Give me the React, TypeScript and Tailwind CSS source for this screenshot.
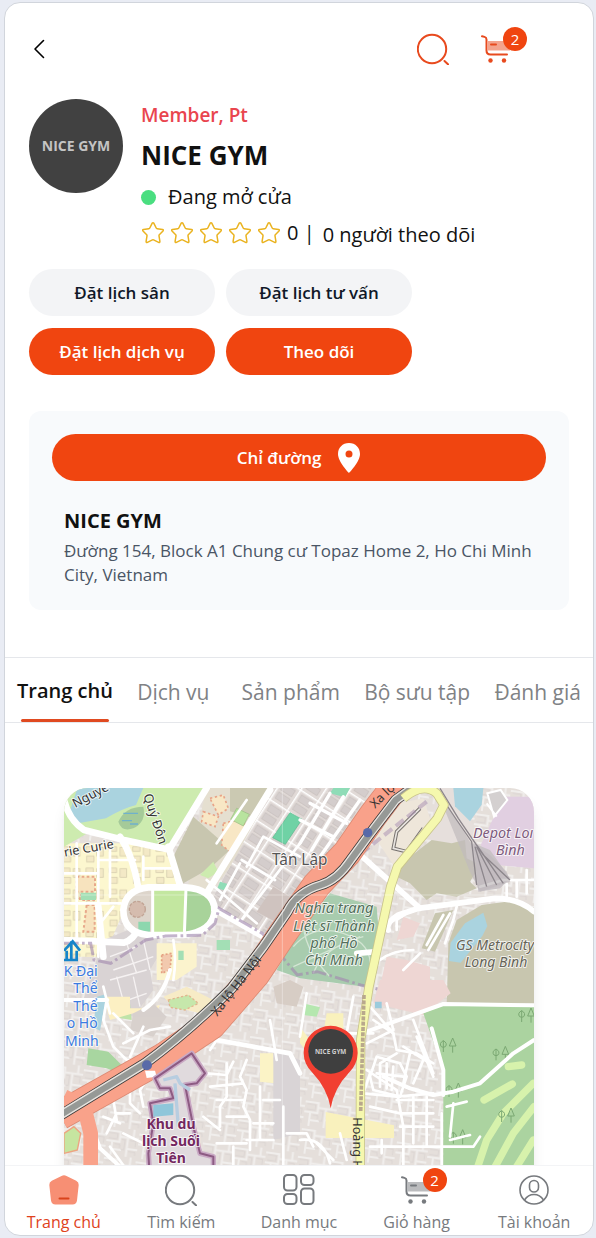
import type { ReactNode } from "react";
import { clsx } from "clsx";

const actions = [
  { label: "Đặt lịch sân", primary: false },
  { label: "Đặt lịch tư vấn", primary: false },
  { label: "Đặt lịch dịch vụ", primary: true },
  { label: "Theo dõi", primary: true },
];

const tabs = ["Trang chủ", "Dịch vụ", "Sản phẩm", "Bộ sưu tập", "Đánh giá"];

function SearchIcon() {
  return (
    <svg viewBox="0 0 32 32" className="h-8 w-8" fill="none" stroke="currentColor" strokeWidth="2">
      <circle cx="15" cy="16" r="14.2" />
      <path d="M27.5 28l3.7 3.5" strokeLinecap="round" />
    </svg>
  );
}

function CartIcon() {
  return (
    <svg viewBox="0 0 32 32" className="h-8 w-8" fill="none" stroke="currentColor" strokeLinecap="round">
      <path d="M7 8h22v9.5H7z" fill="currentColor" stroke="none" opacity="0.5" />
      <path d="M1 3.2l2.5.7q2 .6 2 2.600V17.500q0 4 4 4H26" strokeWidth="2" />
      <path d="M10 11.500h5" strokeWidth="2" />
      <circle cx="9.500" cy="27.500" r="2.200" fill="currentColor" stroke="none" />
      <circle cx="23" cy="27.500" r="2.200" fill="currentColor" stroke="none" />
    </svg>
  );
}

function HomeIcon() {
  return (
    <svg viewBox="0 0 32 32" className="h-8 w-8">
      <path
        d="M13.500 2q2.500-1.600 5 0l9.700 4.700q2.700 1.500 2.500 4.300L29 26.500q-.6 4-4.500 4h-17q-3.900 0-4.500-4L1.300 11Q1.100 8.200 3.800 6.700z"
        fill="#f78f74"
      />
      <path d="M11.500 24.500h9" stroke="#d9441c" strokeWidth="2" strokeLinecap="round" />
    </svg>
  );
}

function GridIcon() {
  return (
    <svg viewBox="0 0 32 32" className="h-8 w-8" fill="none" stroke="currentColor" strokeWidth="2">
      <rect x="1" y="1" width="12.500" height="15.500" rx="3.500" />
      <rect x="1" y="20" width="12.500" height="10" rx="3.500" />
      <rect x="18" y="1" width="12.500" height="10" rx="3.500" />
      <rect x="18" y="14.500" width="12.500" height="15.500" rx="3.500" />
    </svg>
  );
}

function UserIcon() {
  return (
    <svg viewBox="0 0 32 32" className="h-8 w-8" fill="none" stroke="currentColor" strokeWidth="1.6">
      <circle cx="16" cy="16" r="14" />
      <rect x="11.500" y="6.500" width="9" height="11.500" rx="4.500" />
      <path d="M6.500 26q3.500-5.500 9.500-5.500t9.500 5.500" />
    </svg>
  );
}

function StarIcon() {
  return (
    <svg viewBox="0 0 24 24" className="h-6 w-6" fill="none" stroke="#eab320" strokeWidth="1.500">
      <path
        strokeLinejoin="round"
        d="M11.100 2.300q.9-1.300 1.800 0l2.300 4.700q.3.600 1 .7l5.300.8q1.400.3.500 1.500l-3.700 3.700q-.4.500-.3 1.100l.9 5.500q.1 1.500-1.300 1l-5-2.500q-.6-.3-1.200 0l-5 2.500q-1.400.5-1.300-1l.9-5.500q.1-.6-.3-1.100L2 10q-.9-1.200.5-1.500l5.300-.8q.7-.1 1-.7z"
      />
    </svg>
  );
}

function Badge({ children }: { children: ReactNode }) {
  return (
    <span className="absolute -top-1.5 left-[22px] flex h-6 w-6 items-center justify-center rounded-full bg-[#f04510] text-[15px] text-white">
      {children}
    </span>
  );
}

function CityMap() {
  return (
    <svg
      viewBox="12 24 1410 1260"
      className="block h-auto w-full"
      fontFamily="'Noto Sans', sans-serif"
      role="img"
      aria-label="Bản đồ NICE GYM"
    >
      <defs>
        <pattern id="blocks" width="96" height="84" patternUnits="userSpaceOnUse" patternTransform="rotate(8)">
          <path d="M0 12h40v30H0M40 26h56M64 26v58M18 42v42M64 60h32M80 0v26M18 66h30" fill="none" stroke="#f8f8f8" strokeWidth="6" />
          <path d="M6 18h26v16H6M46 34h10v30H46M70 34h18v18M26 50h16v10M70 68h20v10" fill="none" stroke="#cdc6c6" strokeWidth="2" />
        </pattern>
        <pattern id="lots" width="62" height="74" patternUnits="userSpaceOnUse" patternTransform="rotate(33)">
          <path d="M0 0h62M0 0v74" stroke="#fff" strokeWidth="9" fill="none" />
          <path d="M12 12h40v22H12zM12 42h40v22H12z" fill="#d4cdcc" stroke="#bdb6b4" strokeWidth="1.500" />
        </pattern>
        <pattern id="school" width="70" height="64" patternUnits="userSpaceOnUse">
          <path d="M8 8h22v14H8zM40 10h20v26H40zM10 36h22v18H10z" fill="#f3e9c6" stroke="#cfc6a8" strokeWidth="2" />
        </pattern>
      </defs>

      <path d="M0 0h1440v1300H0z" fill="#e5dfdb" />
      <path d="M0 0h1440v1300H0z" fill="url(#blocks)" opacity="0.6" />

      {/* land use */}
      <path d="M12 190h200l110 20 50 110-180 70-60 140H12z" fill="#fcf7cf" />
      <path d="M12 190h200l110 20 50 110-180 70-60 140H12z" fill="url(#school)" />
      <path d="M12 24h428L325 205l-125-20-110-30-78 45z" fill="#cdebb0" />
      <path d="M60 0h200l-32 75q-40 10-90 40l-80 14-30-30z" fill="#aad3df" />
      <path d="M175 125q20-45 75-45 10 45-30 65-35 12-45-20z" fill="#a5ca99" />
      <path d="M190 100h44M186 122h30M210 132h24" stroke="#6fb1cc" strokeWidth="4" />
      <path d="M440 24h250l-235 310-70-20 20-140z" fill="#e5dfd0" />
      <path d="M510 24h120l-50 90-70-20z" fill="#cbc9b2" />
      <path d="M345 220l55-110 80 70 55-35-20 60-65 60-80 45-35-65z" fill="#c8c7b0" />
      <path d="M420 285l40-40 15 30-30 20z" fill="#cdebb0" />
      <path d="M450 55l40-10 15 40-30 20zM430 95l45 15-10 30-40-15zM490 130l60-15 10 40-50 60-25-20z" fill="#f8e7c5" stroke="#e8a488" strokeWidth="5" strokeDasharray="7 8" />
      <path d="M530 85l38 18-18 35-38-20z" fill="#b8e39e" stroke="#9abb83" strokeWidth="2" />
      <path d="M640 24h340L620 480 450 370z" fill="#e1dad7" />
      <path d="M640 24h340L620 480 450 370z" fill="url(#lots)" />
      <path d="M690 98l36 20-50 75-38-20z" fill="#6fd2a6" stroke="#59b98d" strokeWidth="2" />
      <path d="M820 24h50l-15 28-45-12zM480 305l26 8-14 18-20-6z" fill="#8fdcb7" />
      <path d="M640 320l90 55-50 70-90-50z" fill="#cfc4bf" />
      <path d="M130 480l150-60 20 100-30 50 10 60-60 80-150-50z" fill="#d9d3d4" />
      <path d="M150 530l80-30M160 570l120-40M200 490l30 90M250 480l20 90M150 600l110-30M120 690l140-50M170 590l30 110M220 590l20 90" stroke="#f6f2f2" strokeWidth="4" />
      <path d="M290 490h120v70l-60 40h-60z" fill="#fbf3cd" />
      <path d="M305 525l30-5-5 50-25 10z" fill="#f2c9ae" stroke="#e5a283" strokeWidth="5" strokeDasharray="6 6" />
      <path d="M50 290h55v45H50zM60 345h45v15H60zM80 375h24v80H70z" fill="#f7e3be" stroke="#e8a98b" strokeWidth="6" strokeDasharray="8 7" />
      <path d="M62 338h46v22H62zM470 480h40v30h-40zM355 512h16v28h-16z" fill="#a3dfb5" />
      <path d="M150 660l60 10 5 50-60-10z" fill="#bfe3a8" />
      <path d="M130 650h80v35h50l40-10-20 45-60-20-70 20z" fill="#fcf0c4" />
      <path d="M110 650l30-8-20 110-20-10z" fill="#aad3df" />
      <path d="M85 805l60 10 40 40 5 30-50-20-60-10z" fill="#a8d6a0" />
      <path d="M310 650l70-30 40 20 40 20-40 40-80-20z" fill="#f7ecc6" />
      <path d="M325 660l60-15 30 25-40 20-45-8z" fill="#c6e7ac" stroke="#e2b58f" strokeWidth="4" strokeDasharray="7 6" />
      <path d="M220 700l60-30 40 40-40 60-70-20z" fill="#d8d1cd" />
      <path d="M640 620l50-20 40 20-20 60-60-10z" fill="#d8cdc5" />
      <path d="M600 820h40l5 90-45-5z" fill="#fbf3c6" />
      <path d="M640 810l80 30v220l-80 20z" fill="#d9d4d6" />
      <path d="M1015 70l75-15 30 90-120 110-60-90z" fill="#eee6db" />
      <path d="M1130 24h80l60 240-100 40-60-130z" fill="#e6dfdc" />
      <path d="M1025 250l90-70 60 10 40-10 5 55 40 20-30 50 20 20-60 25-60-10-30 20-50-50-40-20z" fill="#c8c7b0" />
      <path d="M1180 24h90l-5 50-35 50-45-45z" fill="#aad3df" />
      <path d="M1330 50h92v215l-110-10-50-60z" fill="#e2cfe2" />
      <path d="M1282 40l40-10 20 30-40 50zM1280 70l30 40" fill="#d4d1d1" stroke="#fff" strokeWidth="6" />
      <path d="M1240 190l50 20 60 85-30 30-65 10z" fill="#c9c3c7" />
      <path d="M1190 420l75-45 110-15 60 30v300h-275l5-200z" fill="#c8c7b0" />
      <path d="M1215 430l55-32 12 40-15 30-65 80-35-5 5-55z" fill="#aad3df" />
      <path d="M1125 400l55-10-55 125-40-10z" fill="#c8c7b0" />
      <path d="M1030 410l50 20-20 40-50 10zM980 530l60 10 70 20v60H960zM960 600h190l22 40-82 65-150-35z" fill="#eed6d3" />
      <path d="M810 340l140 40 5 60-40 180-195-25-70-25 40-70 30-50z" fill="#a8ccae" />
      <path d="M700 500q60-70 150-40t80 110M730 440q10 80 80 150M760 580q30-80 150-110M700 560l200-90" fill="none" stroke="#d3e5d3" strokeWidth="4" />
      <path d="M1090 700l60-25 290 2v630h-290V870z" fill="#abd3a0" />
      <path d="M738 672l42 10-10 28-40-5z" fill="#b5e7b0" />
      <path d="M800 700h50v60h-60zM797 996l205 40v38H797zM720 740l30 40 10 60-40-50z" fill="#f9f1bd" />
      <path d="M945 665h20v20h-20z" fill="#9ccbdc" />

      {/* golf course */}
      <g fill="none" stroke="#d7f2ac" strokeWidth="22" strokeLinecap="round">
        <path d="M1272 960l85-48M1250 1170l30-90 50-80 90-90M1300 1170l60-110 62-80M1370 1160l50-80M1345 860l40-5" />
      </g>
      <g fill="none" stroke="#7ba873" strokeWidth="3">
        {["M1150 800", "M1308 825", "M1167 935", "M1180 1075", "M1385 710", "M1325 1010"].map((start) => (
          <path key={start} d={`${start}m0-18q-14 8-6 18 6 4 12 0 8-10-6-18v34m28-42l-10 24h20zm0 24v20`} />
        ))}
      </g>

      {/* streets */}
      <g fill="none" stroke="#fff" strokeLinejoin="round" strokeLinecap="round">
        <g strokeWidth="8">
          <path d="M50 190v310M115 200v330M12 280h100M12 370h170M120 430l40-50M340 600q10-60 0-120M560 60l-90 130M440 300l150 130M545 240l100 60M480 360l60-110M560 260l50-90 110 60M545 420L720 190M115 240h110M150 200v150M250 230v70M250 265h90" />
          <path d="M250 690q60-40 80-120M12 660h130M90 1025l30 80 60 55" strokeWidth="12" />
          <path d="M140 660l-10 60 30 80 40 40 50 5M130 620l20 80M160 700l60 60M190 790l80-40 60-10M210 830l40-90" />
          <path d="M470 780l220 40 30 60" strokeWidth="14" />
          <path d="M470 780l-20 30M650 840l-20-120M500 850v100l-20 30v60M560 840l-20 50 20 40-10 50 20 40v90M450 920l100-10M470 960h80M500 1010h60M560 1080h80M600 920v160M430 1010l50 40M440 880l60 5 20-40M470 1090h90M520 1100v90M610 960h50M580 1030h60M680 1060h60l20 40M670 980v190" />
          <path d="M260 900l-20 30 10 50M210 930v40l30 30M160 960l10 60M210 1000h-40l-30 60M380 840l50 30M190 1060l60 30M130 1010l50 20M150 1100l50 70" />
          <path d="M720 770l20-130M880 650l-20 110h80M980 670l20 80M930 680l70 80 10 50 60 10 50 30M920 790l80-40M920 870l90 60 20 110v120M1010 820l-50 30M940 930l-10-40 20-60 70 20 20 40-20 60zM960 850v70M980 850v75M1000 860l-5 70M950 880l80 10M1090 840l-30 70M1050 820l-20 90" />
          <path d="M930 880l-20 60 100 10 110-10M1010 960h110M930 980l90 20h100M1060 950v140M1100 950v150M1020 1040h100M930 1100h310l20-30M1170 1080l60-15M1180 970l-10 100M1145 1000v170M1160 980l60-15M840 1060l20 80M770 1090l50 50M720 1080q70-10 90 70M965 1080v40M1030 800l80 50M1070 770l50 120M940 720l60 40M1060 720l60 160" />
          <path d="M1010 450v-30l30-20M960 540q40-30 100-30M1080 520l-50 50M1170 400l-65 110M1150 405l-50 90M1190 380l-10 40-25 70M1260 320l70-20M1340 310v50M1370 300v50M1400 270v70M1325 300h97" />
        </g>
        <path d="M810 40L720 190M850 50l-95 160M900 60L780 230M720 120l100 50M750 70l110 60" strokeWidth="10" />
        <path d="M1115 745l35 125v75M970 890l80 35 70 20 60-10 80-25 100-90 62-40" strokeWidth="12" />
        <path d="M905 760l245-88 280 4" strokeWidth="12" />
        <path d="M12 60q15 60 60 90l120 30 130 28M180 170q40 60 55 155M325 200l35 115M330 205L440 24M630 30L440 340M980 50L620 480M460 385l160 90M12 480l180 8q30-10 40-40M115 380l15 150" strokeWidth="20" />
        <path d="M890 215l190 170M985 450q-10-20 30-45l60-20 230-30q70 0 117 40M890 520l60-5" strokeWidth="17" />
      </g>

      {/* stadium */}
      <path d="M275 320h45v145h-55q-75-20-75-75 10-60 85-70z" fill="#ddd5cb" />
      <circle cx="232" cy="388" r="24" fill="#d5bcae" stroke="#c1a495" strokeWidth="4" strokeDasharray="10 4" />
      <path d="M235 425h35v30h-35z" fill="#8ed7ae" />
      <path d="M278 325h100v145H275z" fill="#c4e7a0" />
      <path d="M378 325q75 10 75 65t-78 78z" fill="#a9d39b" />
      <path d="M278 325v145M378 325l-5 140" stroke="#fff" strokeWidth="9" />
      <path d="M265 322h110q85 5 90 68-5 65-95 75H265q-75-8-75-75 5-60 75-68z" fill="none" stroke="#fff" strokeWidth="20" />
      <path d="M12 490h80l10 50 50 10 105-70 60-12 110-2 38-36 12-45 130 75 25 30 80 95 60-10 130 40 50 12" fill="none" stroke="#a58cb0" strokeWidth="9" strokeDasharray="44 10 8 10" opacity="0.65" />

      {/* railway depot */}
      <g fill="none" stroke="#8d878c">
        <path d="M1130 30l60 90 40 65 60 40 50 50 10 30-90 30-30-60z" fill="#c0babd" stroke="none" opacity="0.7" />
        <path d="M1130 30l60 90 45 65 15 130M1140 25l55 90 75 110 80 75M1245 200l35 120M1250 200l60 115M1250 195l80 115" strokeWidth="4" />
        <path d="M1080 85l-70 70-10 50 40 10 50-70" strokeWidth="11" stroke="#77726f" />
        <path d="M1080 85l-70 70-10 50 40 10 50-70" strokeWidth="5" stroke="#e8e4e0" />
        <path d="M1100 65l-190 150" strokeWidth="12" stroke="#a58cb0" strokeDasharray="30 14" opacity="0.5" />
      </g>

      {/* Hà Nội highway */}
      <g fill="none" strokeLinejoin="round">
        <path d="M1020 0l-80 105-80 115-90 95-105 150-80 120-130 150-150 100L0 1006" stroke="#dc8a74" strokeWidth="88" />
        <path d="M1020 0l-80 105-80 115-90 95-105 150-80 120-130 150-150 100L0 1006" stroke="#f9a28a" strokeWidth="83" />
        <path d="M12 950l60 30 20 80v140" stroke="#f9a28a" strokeWidth="44" />
        <path d="M12 1060l30-20 20 20-10 50-40 10z" fill="#c6e5a0" stroke="#eda481" strokeWidth="4" />
        <path d="M1062 20l-55 40-80 105-55 75q-40 60-90 75-70 20-100 80l-72 105-95 125q-130 130-260 225L0 1006" stroke="#3e3c3b" strokeWidth="32" />
        <path d="M1062 20l-55 40-80 105-55 75q-40 60-90 75-70 20-100 80l-72 105-95 125q-130 130-260 225L0 1006" stroke="#e8e4e0" strokeWidth="27" />
        <path d="M1062 20l-55 40-80 105-55 75q-40 60-90 75-70 20-100 80l-72 105-95 125q-130 130-260 225L0 1006" stroke="#969996" strokeWidth="19" />
      </g>
      <circle cx="923" cy="158" r="14" fill="#596aa8" />
      <circle cx="261" cy="856" r="15" fill="#596aa8" />
      <path d="M255 872l30 0 5 18-30 4z" fill="#fff" />

      {/* yellow road */}
      <g fill="none" strokeLinejoin="round">
        <path d="M1030 55q60-50 100 -15l22 35-20 40-120 145-20 60-15 70-50 230-25 160-2 520" stroke="#c9c58c" strokeWidth="28" />
        <path d="M1030 55q60-50 100 -15l22 35-20 40-120 145-20 60-15 70-50 230-25 160-2 520" stroke="#f6f8ae" strokeWidth="23" />
        <path d="M912 645l-10 350" stroke="#b8a88c" strokeWidth="11" strokeDasharray="12 4" />
      </g>

      {/* Suối Tiên park */}
      <g fill="none" strokeLinejoin="round">
        <path d="M285 895l110-75 40 60-25 30-35 5 25 125 20 80 40 10v70H270l-5-80 15-90-10-60 70-15-10-30h-30z" fill="#e0dadd" stroke="#c9a9c4" strokeWidth="16" />
        <path d="M285 895l110-75 40 60-25 30-35 5 25 125 20 80 40 10v70H270l-5-80 15-90-10-60 70-15-10-30h-30z" stroke="#8d5b83" strokeWidth="6" />
        <path d="M280 975l60-5v35l-60 5z" fill="#8fc6da" />
        <path d="M310 900l40-10 10 20 30 20M345 910l10 130" stroke="#b7cde0" strokeWidth="10" />
      </g>

      <path d="M12 345h1410M667 24v1260" stroke="#fff" strokeWidth="1.500" opacity="0.7" />

      {/* labels */}
      <g strokeLinejoin="round" paintOrder="stroke" stroke="#fff" strokeOpacity="0.75" strokeWidth="6">
        <g fontSize="38" fill="#333">
          <text x="46" y="84" transform="rotate(-28 46 84)">Nguyễ</text>
          <text x="250" y="46" transform="rotate(72 250 46)">Quý Đôn</text>
          <text x="14" y="230" transform="rotate(-10 14 230)">rie Curie</text>
          <text x="636" y="256" fontSize="46" fill="#555">Tân Lập</text>
        </g>
        <g fontSize="38" fill="#333" stroke="none">
          <text x="945" y="86" transform="rotate(-44 945 86)">Xa lộ</text>
          <text x="472" y="710" transform="rotate(-52 472 710)">Xa lộ Hà Nội</text>
          <text x="878" y="1012" transform="rotate(90 878 1012)">Hoàng H</text>
        </g>
        <g fontSize="44" fontStyle="italic" textAnchor="middle" fill="#54705c">
          <text x="822" y="400">Nghĩa trang</text>
          <text x="822" y="452">Liệt sĩ Thành</text>
          <text x="822" y="503">phố Hồ</text>
          <text x="822" y="555">Chí Minh</text>
        </g>
        <g fontSize="43" fontStyle="italic" fill="#7d5a7c">
          <text x="1239" y="174">Depot Loı</text>
          <text x="1308" y="224">Bình</text>
        </g>
        <g fontSize="42" fontStyle="italic" fill="#666458">
          <text x="1188" y="509">GS Metrocity</text>
          <text x="1214" y="562">Long Bình</text>
        </g>
        <g fontSize="42" fill="#3b7be0" textAnchor="end">
          <text x="113" y="588">K Đại</text>
          <text x="113" y="640">Thể</text>
          <text x="113" y="692">Thể</text>
          <text x="113" y="744">o Hồ</text>
          <text x="116" y="798">Minh</text>
        </g>
        <g fontSize="42" fontWeight="700" textAnchor="middle" fill="#74285f">
          <text x="333" y="1046">Khu du</text>
          <text x="333" y="1097">lịch Suối</text>
          <text x="333" y="1149">Tiên</text>
        </g>
      </g>
      <path d="M12 512l26-28 22 28M20 512v30M50 512v30M8 540h46M34 484v56" fill="none" stroke="#1685c9" strokeWidth="8" />

      {/* place marker */}
      <path d="M812 985q-10-60-56-108a81 81 0 1 1 112 0q-46 48-56 108z" fill="#f13f31" />
      <circle cx="812" cy="814" r="67" fill="#3f3f3f" />
      <text x="812" y="822" textAnchor="middle" fontSize="19" fontWeight="700" fill="#d0d0d0">
        NICE GYM
      </text>
    </svg>
  );
}

function NavItem({ label, active, children }: { label: string; active?: boolean; children: ReactNode }) {
  return (
    <a
      href="#"
      className={clsx(
        "flex flex-1 flex-col items-center gap-1 pt-2 text-base leading-6",
        active ? "text-[#e0421c]" : "text-[#777a7e]",
      )}
    >
      {children}
      {label}
    </a>
  );
}

export default function App() {
  return (
    <div className="h-screen bg-[#e9ecf4] pt-0.5 pr-0.5 pb-0.5 pl-1 font-['Open_Sans','Noto_Sans',sans-serif] text-[#111]">
      <div className="flex h-full flex-col overflow-hidden rounded-2xl border border-gray-300 bg-white">
        <main className="min-h-0 flex-1 overflow-y-auto [scrollbar-width:none]">
          <header className="flex h-24 items-center justify-between pr-20 pb-1 pl-7">
            <button type="button" aria-label="Quay lại" className="text-black">
              <svg viewBox="0 0 12 20" className="h-5 w-3" fill="none" stroke="currentColor" strokeWidth="1.6">
                <path d="M10.500 1.500L2 10l8.500 8.500" strokeLinecap="round" strokeLinejoin="round" />
              </svg>
            </button>
            <div className="flex items-center gap-8 text-[#e84a1e]">
              <button type="button" aria-label="Tìm kiếm">
                <SearchIcon />
              </button>
              <button type="button" aria-label="Giỏ hàng" className="relative">
                <CartIcon />
                <Badge>2</Badge>
              </button>
            </div>
          </header>

          <section className="flex gap-[18px] px-6">
            <div className="flex h-[94px] w-[94px] shrink-0 items-center justify-center rounded-full bg-[#414141] text-sm font-bold text-[#c4c4c4]">
              NICE GYM
            </div>
            <div className="pt-1">
              <p className="text-[19px] leading-6 font-semibold text-[#e9454e]">Member, Pt</p>
              <h1 className="pt-2 text-[26px] leading-10 font-bold">NICE GYM</h1>
              <p className="flex items-center gap-3 pt-1 text-[20px] leading-9">
                <span className="h-[15px] w-[15px] rounded-full bg-[#4ade80]" />
                Đang mở cửa
              </p>
              <div className="flex items-center text-[20px] leading-8">
                <span className="mr-1.5 flex gap-[5px]">
                  {[1, 2, 3, 4, 5].map((n) => (
                    <StarIcon key={n} />
                  ))}
                </span>
                <span>0 |</span>
                <span className="ml-2 pt-1">0 người theo dõi</span>
              </div>
            </div>
          </section>

          <div className="flex flex-wrap gap-x-[11px] gap-y-3 px-6 pt-[18px]">
            {actions.map((action) => (
              <button
                key={action.label}
                type="button"
                className={clsx(
                  "h-[47px] w-[186px] rounded-full text-[17px] font-semibold",
                  action.primary ? "bg-[#f04510] text-white" : "bg-gray-100 text-gray-900",
                )}
              >
                {action.label}
              </button>
            ))}
          </div>

          <section className="mx-6 mt-9 rounded-xl bg-[#f8fafc] p-[23px]">
            <button
              type="button"
              className="flex h-[47px] w-full items-center justify-center gap-4 rounded-full bg-[#f04510] text-[17px] font-semibold text-white"
            >
              Chỉ đường
              <svg viewBox="0 0 24 32" className="h-8 w-6" fill="currentColor">
                <path fillRule="evenodd" d="M12 1C5.500 1 1 5.700 1 12c0 8 11 19 11 19s11-11 11-19C23 5.700 18.500 1 12 1zm0 7.500a3.500 3.500 0 1 1 0 7 3.500 3.500 0 0 1 0-7z" />
              </svg>
            </button>
            <div className="px-3 pt-[22px]">
              <h2 className="text-[20px] leading-9 font-bold">NICE GYM</h2>
              <p className="text-[17px] leading-6 text-gray-600">
                Đường 154, Block A1 Chung cư Topaz Home 2, Ho Chi Minh City, Vietnam
              </p>
            </div>
          </section>

          <nav className="mt-[47px] flex h-[66px] justify-between border-y border-gray-200 px-3">
            {tabs.map((tab, i) => (
              <a
                key={tab}
                href="#"
                className={clsx(
                  "flex min-w-20 flex-col pt-[5px] whitespace-nowrap",
                  i === 0 ? "text-[20px] font-semibold" : "text-[21px] text-[#808285]",
                )}
              >
                <span className="flex flex-1 items-center">{tab}</span>
                {i === 0 && <span className="h-[3px] w-[88px] self-center rounded-full bg-[#e04a20]" />}
              </a>
            ))}
          </nav>

          <section className="mx-[59px] mt-[65px] overflow-hidden rounded-3xl shadow-lg">
            <CityMap />
          </section>
        </main>

        <footer className="flex h-[70px] shrink-0 border-t border-gray-100">
          <NavItem label="Trang chủ" active>
            <HomeIcon />
          </NavItem>
          <NavItem label="Tìm kiếm">
            <SearchIcon />
          </NavItem>
          <NavItem label="Danh mục">
            <GridIcon />
          </NavItem>
          <NavItem label="Giỏ hàng">
            <span className="relative">
              <CartIcon />
              <Badge>2</Badge>
            </span>
          </NavItem>
          <NavItem label="Tài khoản">
            <UserIcon />
          </NavItem>
        </footer>
      </div>
    </div>
  );
}
